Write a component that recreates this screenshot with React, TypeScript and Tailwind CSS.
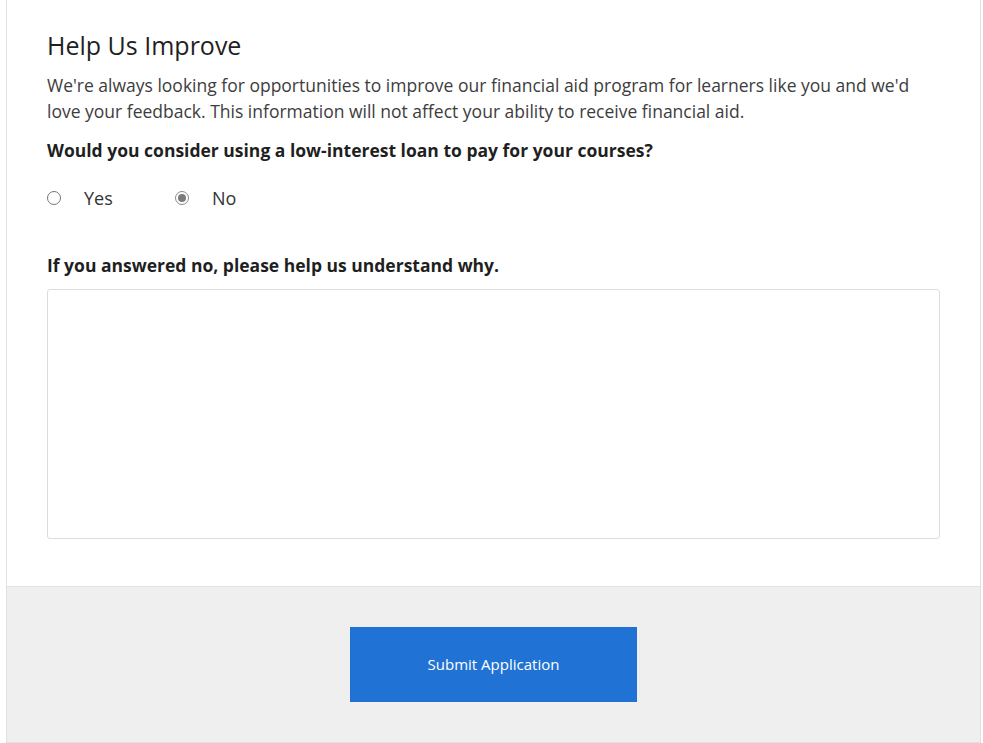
import React, { useState } from "react";

const RadioOption: React.FC<{
  label: string;
  checked: boolean;
  onSelect: () => void;
}> = ({ label, checked, onSelect }) => (
  <label className="flex items-center cursor-pointer" onClick={onSelect}>
    <span
      className={`w-[14px] h-[14px] rounded-full border flex items-center justify-center bg-white ${
        checked ? "border-[#8a8a8a]" : "border-[#767676]"
      }`}
    >
      {checked && <span className="w-[8px] h-[8px] rounded-full bg-[#7a7a7a]" />}
    </span>
    <span className="ml-[23px] text-[18px] text-[#333333]">{label}</span>
  </label>
);

const App: React.FC = () => {
  const [answer, setAnswer] = useState<"yes" | "no">("no");
  const [reason, setReason] = useState<string>("");

  return (
    <main
      className="w-full min-h-screen bg-white"
      style={{ fontFamily: '"Open Sans", "Liberation Sans", sans-serif' }}
    >
      <section className="ml-[6px] w-[975px] border-x border-b border-[#e1e1e1]">
        {/* Feedback form */}
        <div className="px-[40px] pt-[29px] pb-[47px] bg-white">
          <h2 className="text-[25px] leading-[32px] text-[#1f1f1f]">Help Us Improve</h2>
          <p className="mt-[11px] text-[17.5px] leading-[26px] text-[#3d3d3d]">
            We're always looking for opportunities to improve our financial aid program for
            learners like you and we'd love your feedback. This information will not affect
            your ability to receive financial aid.
          </p>

          <p className="mt-[14px] text-[17.5px] leading-[24px] font-bold text-[#1f1f1f]">
            Would you consider using a low-interest loan to pay for your courses?
          </p>

          {/* Yes / No */}
          <div className="mt-[23px] flex items-center h-[26px]">
            <div className="w-[128px]">
              <RadioOption label="Yes" checked={answer === "yes"} onSelect={() => setAnswer("yes")} />
            </div>
            <RadioOption label="No" checked={answer === "no"} onSelect={() => setAnswer("no")} />
          </div>

          <p className="mt-[42px] text-[17.5px] leading-[24px] font-bold text-[#1f1f1f]">
            If you answered no, please help us understand why.
          </p>

          <textarea
            value={reason}
            onChange={(e) => setReason(e.target.value)}
            className="mt-[12px] block w-full h-[250px] border border-[#dcdcdc] rounded-[3px] p-3 resize-none outline-none text-[16px]"
          />
        </div>

        {/* Submit */}
        <div className="bg-[#efefef] border-t border-[#e3e3e3] h-[156px] flex justify-center pt-[40px]">
          <button className="w-[287px] h-[75px] bg-[#2073d4] text-white text-[15px] cursor-pointer">
            Submit Application
          </button>
        </div>
      </section>
    </main>
  );
};

export default App;
